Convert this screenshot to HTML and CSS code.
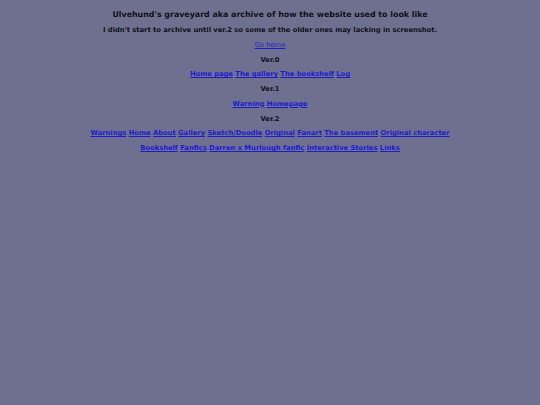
FILE: index.html
```html
<!DOCTYPE html>
<html>
<head>
<meta charset="utf-8">
<link rel="stylesheet" href="styles.css">
</head>
<body>
<div class="page">
  <h1 class="title">Ulvehund's graveyard aka archive of how the website used to look like</h1>
  <p class="line bold">I didn't start to archive until ver.2 so some of the older ones may lacking in screenshot.</p>
  <p class="line"><a href="#">Go home</a></p>
  <p class="line bold">Ver.0</p>
  <p class="line bold"><a href="#">Home page</a> <a href="#">The gallery</a> <a href="#">The bookshelf</a> <a href="#">Log</a></p>
  <p class="line bold">Ver.1</p>
  <p class="line bold"><a href="#">Warning</a> <a href="#">Homepage</a></p>
  <p class="line bold">Ver.2</p>
  <p class="line bold"><a href="#">Warnings</a> <a href="#">Home</a> <a href="#">About</a> <a href="#">Gallery</a> <a href="#">Sketch/Doodle</a> <a href="#">Original</a> <a href="#">Fanart</a> <a href="#">The basement</a> <a href="#">Original character</a></p>
  <p class="line bold"><a href="#">Bookshelf</a> <a href="#">Fanfics</a> <a href="#">Darren x Murlough fanfic</a> <a href="#">Interactive Stories</a> <a href="#">Links</a></p>
</div>
</body>
</html>
```
FILE: styles.css
```css
html, body {
  margin: 0;
  padding: 0;
  background: #6f7090;
}
body {
  font-family: "DejaVu Sans", sans-serif;
  color: #111118;
}
.page {
  padding-top: 6px;
  text-align: center;
}
.title {
  margin: 0;
  font-size: 7.9px;
  line-height: 17px;
  font-weight: bold;
}
.line {
  margin: 0;
  font-size: 6.75px;
  line-height: 14.75px;
}
.bold {
  font-weight: bold;
}
a {
  color: #1c1ccf;
  text-decoration: underline;
}
```
